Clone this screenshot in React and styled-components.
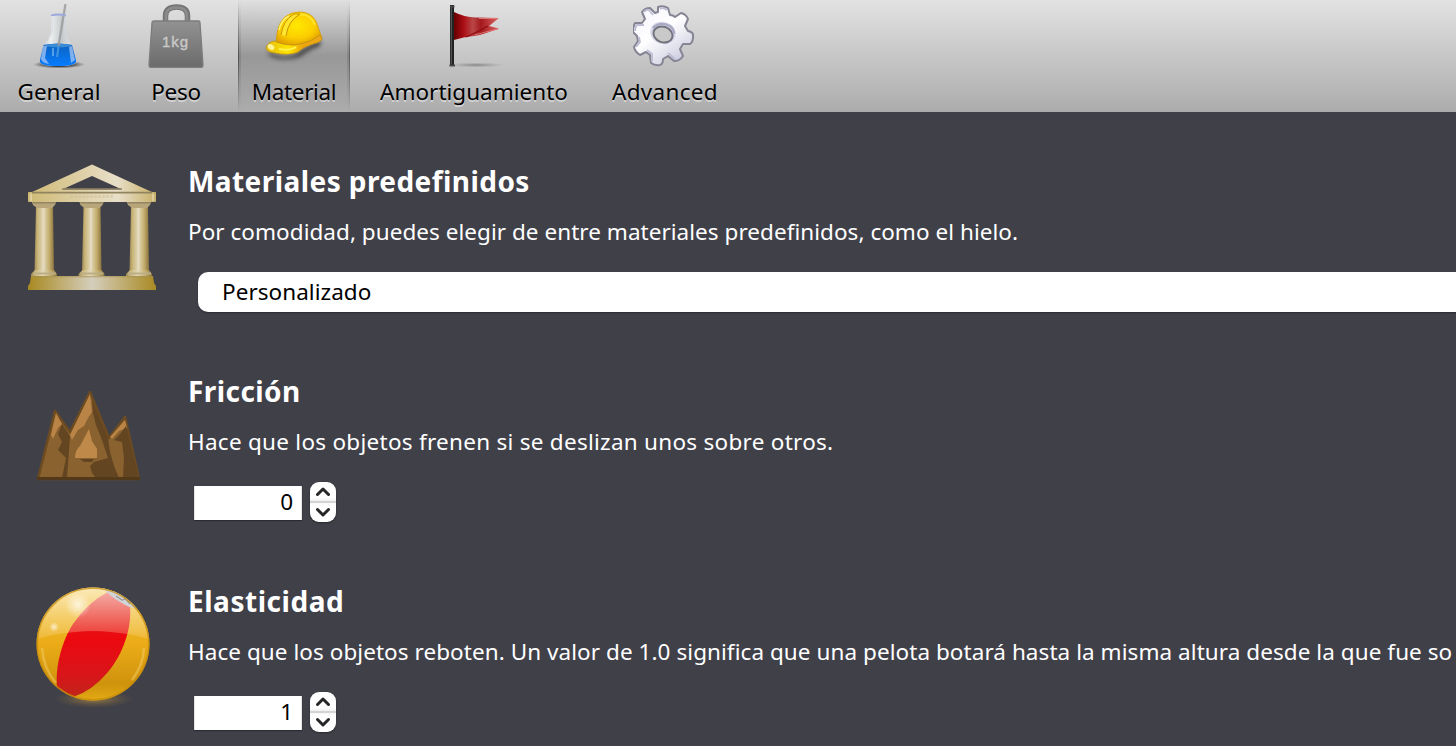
import React from "react";
import styled, { createGlobalStyle } from "styled-components";

const GlobalStyle = createGlobalStyle`
  * { box-sizing: border-box; }
  body { margin: 0; background: #404049; overflow: hidden; }
`;

const Window = styled.div`
  width: 100%;
  height: 746px;
  overflow: hidden;
  display: flex;
  flex-direction: column;
  background: #404049;
  border-bottom: 1px solid #47404b;
  font-family: "Noto Sans", "Open Sans", sans-serif;
  font-size: 22.5px;
  color: #fff;
`;

const Toolbar = styled.nav`
  flex: none;
  height: 112px;
  display: flex;
  gap: 16px;
  padding-left: 4px;
  background: linear-gradient(#e2e2e2, #acacac);
`;

const edge = (side, alpha, width) =>
  `linear-gradient(rgba(0,0,0,0), rgba(0,0,0,${alpha}) 50%, rgba(0,0,0,0)) ${side} / ${width}px 100% no-repeat`;

const Tab = styled.button`
  flex: none;
  width: ${(p) => p.$width}px;
  height: 112px;
  padding: 4px 0 0;
  border: 0;
  display: flex;
  flex-direction: column;
  align-items: center;
  font: inherit;
  color: #000;
  background: ${(p) =>
    p.$active
      ? `${edge("left", 0.4, 1)}, ${edge("left", 0.12, 3)}, ${edge("right", 0.3, 1)}, ${edge("right", 0.12, 3)},
         linear-gradient(#e0e0e0, #989898 50%, #acacac)`
      : "transparent"};
`;

const TabLabel = styled.span`
  height: 40px;
  line-height: 40px;
  margin-top: 4px;
  white-space: nowrap;
  letter-spacing: ${(p) => p.$spacing}px;
  text-shadow: 0 2px 0 rgba(255, 255, 255, 0.45);
`;

const Content = styled.main`
  display: flex;
  flex-direction: column;
  gap: 60px;
  padding: 50px 0 0 28px;
`;

const Section = styled.section`
  display: grid;
  grid-template-columns: 128px 1fr;
  column-gap: 32px;
  height: 150px;
`;

const Picture = styled.div`
  padding-top: 2px;
  height: 130px;
  svg { display: block; }
`;

const Body = styled.div`
  min-width: 0;
`;

const Title = styled.h2`
  margin: 0;
  font-size: 28px;
  font-weight: 700;
  line-height: 38px;
  letter-spacing: ${(p) => p.$spacing}px;
  white-space: nowrap;
`;

const Description = styled.p`
  margin: 12px 0 20px;
  line-height: 40px;
  letter-spacing: ${(p) => p.$spacing}px;
  white-space: nowrap;
`;

const Select = styled.div`
  margin-left: 10px;
  height: 40px;
  padding-left: 24px;
  line-height: 40px;
  border-radius: 10px 0 0 10px;
  background: #fff;
  color: #000;
  letter-spacing: 0.05px;
  box-shadow: 0 1px 2px rgba(0, 0, 0, 0.35);
`;

const Spinner = styled.div`
  display: flex;
  align-items: flex-start;
  gap: 8px;
  height: 40px;
  padding-left: 6px;
`;

const NumberField = styled.div`
  width: 108px;
  height: 34px;
  margin-top: 4px;
  padding-right: 8px;
  line-height: 32px;
  text-align: right;
  color: #000;
  background: #fff;
  border: solid #e3e3e3;
  border-width: 0 1px;
  box-shadow: 0 1px 1px rgba(0, 0, 0, 0.3);
`;

const Stepper = styled.div`
  width: 26px;
  height: 40px;
  display: flex;
  flex-direction: column;
  border-radius: 9px;
  background: linear-gradient(#fff 40%, #f0f0f0 47%, #d4d4d4 48% 52%, #f8f8f8 53%, #fff 60%);
  box-shadow: 0 1px 2px rgba(0, 0, 0, 0.4);
  svg { display: block; }
`;

const FlaskIcon = () => (
  <svg width="64" height="64" viewBox="0 0 64 64">
    <defs>
      <radialGradient id="flaskShadow">
        <stop offset="0.5" stopColor="#222" stopOpacity=".8" />
        <stop offset="1" stopColor="#444" stopOpacity="0" />
      </radialGradient>
      <linearGradient id="flaskGlass">
        <stop offset="0" stopColor="#b9c0cc" />
        <stop offset=".3" stopColor="#f0f2f3" />
        <stop offset=".6" stopColor="#c3c9cb" />
        <stop offset="1" stopColor="#eef0f4" />
      </linearGradient>
      <linearGradient id="flaskLiquid" x2="0" y2="1">
        <stop offset="0" stopColor="#0b62bd" />
        <stop offset="1" stopColor="#087cff" />
      </linearGradient>
    </defs>
    <ellipse cx="32" cy="60.5" rx="26" ry="4" fill="url(#flaskShadow)" />
    <path d="M24 11H38V27C38 31 42 36 44 41L49 56C50 60 46 62 31 62S12 60 13 56L17 42C19 37 24 31 24 27Z" fill="url(#flaskGlass)" opacity=".9" />
    <path d="M16.500 41Q31 38 45 41L49 56C50 60 45 62 31 62S12 60 13 56Z" fill="url(#flaskLiquid)" />
    <ellipse cx="31" cy="41.500" rx="13.500" ry="1.700" fill="#3a8bd8" />
    <path d="M16 42L14 55Q15 59 22 60L18 54L20 42Z M45 42L48 56L44 59L42 43Z" fill="#b1ccf5" opacity=".7" />
    <path d="M38.500 0L37 9L31.500 42" fill="none" stroke="#999" strokeWidth="2.300" opacity=".8" />
    <path d="M31.500 43L30 53" fill="none" stroke="#5aa6ea" strokeWidth="2" opacity=".7" />
    <path d="M26 44V52" stroke="#71b6ee" strokeWidth="1.400" />
    <path d="M24 11.500Q31 9.500 39 11.500" fill="none" stroke="#9ba9dc" strokeWidth="1.800" />
    <path d="M25 13V27Q23 34 19 39M38 13V28Q39 33 42 38" fill="none" stroke="#d3d7dd" strokeWidth="1" />
  </svg>
);

const WeightText = styled.text`
  font-family: "Liberation Sans", Arial, sans-serif;
  font-size: 15px;
  fill: #c9c9c9;
  stroke: #c9c9c9;
  stroke-width: 0.4px;
`;

const WeightIcon = () => (
  <svg width="64" height="64" viewBox="0 0 64 64">
    <defs>
      <linearGradient id="weight" x2="0" y2="1">
        <stop offset="0" stopColor="#929292" />
        <stop offset="1" stopColor="#6b6b6b" />
      </linearGradient>
    </defs>
    <path d="M21.500 19V12Q21.500 3 32.500 3T43.500 12V19" fill="none" stroke="#757575" strokeWidth="5.500" />
    <path d="M22 18V12Q22 3.500 32.500 3.500T43 12V18" fill="none" stroke="#8c8c8c" strokeWidth="2.500" />
    <path d="M10 17H55Q56 17 56 19L59 61Q59 63.500 57 63.500H7Q5 63.500 5 61L8 19Q8 17 10 17Z" fill="url(#weight)" stroke="#7c7c7c" strokeWidth="1.300" />
    <WeightText x="18" y="43" textLength="26">1kg</WeightText>
  </svg>
);

const HelmetIcon = () => (
  <svg width="64" height="64" viewBox="0 0 64 64">
    <defs>
      <radialGradient id="helmet" cx=".45" cy=".4" r=".65">
        <stop offset="0" stopColor="#ffe900" />
        <stop offset=".6" stopColor="#fccd00" />
        <stop offset="1" stopColor="#dc9800" />
      </radialGradient>
      <linearGradient id="helmetBrim">
        <stop offset="0" stopColor="#e5bd12" />
        <stop offset=".4" stopColor="#ffe400" />
        <stop offset=".65" stopColor="#eba60c" />
        <stop offset="1" stopColor="#eca71b" />
      </linearGradient>
      <filter id="helmetBlur" x="-20%" y="-20%" width="140%" height="160%"><feGaussianBlur stdDeviation="2" /></filter>
    </defs>
    <path d="M5 47Q20 56 34 50Q45 41 59 36L58 42Q45 47 38 53Q20 58 8 52Z" fill="#444" filter="url(#helmetBlur)" />
    <path d="M14 38C15 31 15 20 23 13Q29 8 37 8C48 8 53 14 55 20Q57 26 60 34Q51 40 40 40Q24 43 14 39Z" fill="url(#helmet)" stroke="#d69d04" strokeWidth=".8" />
    <path d="M4 44Q6 38 12 37Q26 43 38 40Q49 38 58 31L60 35Q59 38 51 40Q41 43 36 48Q27 52 13 49Q4 48 4 44Z" fill="url(#helmetBrim)" stroke="#bd8f13" strokeWidth=".8" />
    <path d="M19 31Q21 16 32 10L38 10Q26 17 24 32" fill="#ffe52c" stroke="#c89400" strokeWidth="1" />
    <path d="M17 26Q19 16 27 12" fill="none" stroke="#fff06f" strokeWidth="1.500" />
    <path d="M38 10.500Q49 10 53 21" fill="none" stroke="#ffe52e" strokeWidth="2" />
    <ellipse cx="9" cy="43" rx="3.500" ry="2.500" fill="#fff49a" transform="rotate(30 9 43)" />
    <path d="M17 45Q28 47 34 43" fill="none" stroke="#fff34c" strokeWidth="2" />
  </svg>
);

const FlagIcon = () => (
  <svg width="64" height="64" viewBox="0 0 64 64">
    <defs>
      <linearGradient id="flag">
        <stop offset="0" stopColor="#650000" />
        <stop offset=".2" stopColor="#a80c12" />
        <stop offset=".42" stopColor="#b94646" />
        <stop offset=".6" stopColor="#a3191d" />
        <stop offset="1" stopColor="#dd6565" />
      </linearGradient>
      <radialGradient id="flagShadow">
        <stop offset="0" stopColor="#555" stopOpacity=".55" />
        <stop offset="1" stopColor="#777" stopOpacity="0" />
      </radialGradient>
    </defs>
    <ellipse cx="34" cy="61" rx="28" ry="2.500" fill="url(#flagShadow)" />
    <path d="M12 8Q22 13 34 13.500L57 14L47 22L57 24.500Q40 31 32 32Q21 33 12 36Z" fill="url(#flag)" />
    <path d="M24 33Q36 28 46 22" fill="none" stroke="#8f0d13" strokeWidth="1.200" />
    <path d="M37 14.500L56 14.500M33 31Q43 28 56 25" stroke="#e07777" strokeWidth="1" fill="none" />
    <path d="M10 1V62" stroke="#222" strokeWidth="4" />
    <path d="M9.300 2V60" stroke="#5a6060" strokeWidth="1" />
    <path d="M8 2.500H12.500M7.500 61.500H13" stroke="#454949" strokeWidth="2" />
  </svg>
);

const GearIcon = () => (
  <svg width="64" height="64" viewBox="0 0 64 64">
    <defs>
      <linearGradient id="gear" x2=".7" y2="1">
        <stop offset="0" stopColor="#f3f3fb" />
        <stop offset=".5" stopColor="#fff" />
        <stop offset="1" stopColor="#cbcbe0" />
      </linearGradient>
    </defs>
    <g transform="translate(-1 0)">
      <path d="M26 3Q31 1 36 4L38 11Q41 11 43 13L49 9Q54 10 56 15L53 22L56 27Q62 28 61 33Q61 38 58 40L51 40L48 45L51 52Q48 57 42 57L36 52L31 55Q31 60 28 61Q23 62 19 59L18 51L14 48L8 51Q3 48 2 43L6 37L5 32L1 28Q1 23 3 19L10 19L13 15L10 8Q13 4 18 4L23 9L26 8Z"
        fill="url(#gear)" stroke="#858594" strokeWidth="2" strokeLinejoin="round" />
      <path d="M28 5Q31 3 35 6M12 8Q14 5 17 6L21 11M3 27Q3 23 5 21L12 21M4 43L8 38L7 33M20 58L20 50L15 46M43 55L36 49" fill="none" stroke="#bdbdd3" strokeWidth="1.800" />
      <ellipse cx="31" cy="29" rx="13" ry="11" fill="#d9d9eb" transform="rotate(20 31 29)" />
      <ellipse cx="31" cy="30.500" rx="9.800" ry="7.800" fill="#c9c9c9" stroke="#72727d" strokeWidth="2" transform="rotate(20 31 30.500)" />
      <path d="M21 24Q28 17 38 22Q42 25 42 30" fill="none" stroke="#aaaac5" strokeWidth="2.500" />
    </g>
  </svg>
);

const TempleIcon = () => (
  <svg width="128" height="128" viewBox="0 0 128 128">
    <defs>
      <linearGradient id="roof">
        <stop offset="0" stopColor="#cfba75" />
        <stop offset=".7" stopColor="#e8dfc9" />
        <stop offset="1" stopColor="#c8b06a" />
      </linearGradient>
      <linearGradient id="column">
        <stop offset="0" stopColor="#9d8854" />
        <stop offset=".15" stopColor="#c8b477" />
        <stop offset=".45" stopColor="#e2d8bb" />
        <stop offset=".75" stopColor="#c4ae6d" />
        <stop offset="1" stopColor="#8a733e" />
      </linearGradient>
      <linearGradient id="plinth">
        <stop offset="0" stopColor="#a88920" />
        <stop offset=".5" stopColor="#d5cebc" />
        <stop offset="1" stopColor="#a98a23" />
      </linearGradient>
    </defs>
    <path fillRule="evenodd" d="M64 .5L126 29H2ZM64 12L34 25.500H94Z" fill="url(#roof)" />
    <path d="M34 25H94" stroke="#958763" strokeWidth="1.500" />
    <rect y="28" width="128" height="10" rx="1" fill="url(#roof)" />
    <path d="M4 28.700H124" stroke="#92845f" strokeWidth="1.800" />
    <path d="M3 30V37M125 30V37" stroke="#eee3c9" strokeWidth="1" />
    <path d="M42 32.500H86" stroke="#cdbf97" strokeWidth="2.500" strokeDasharray="3 1" opacity=".5" />
    {[0, 47.5, 95].map((x) => (
      <g key={x} transform={`translate(${x} 0)`}>
        <path d="M8 43H25L26 107H6.500Z" fill="url(#column)" />
        <path d="M15.500 44V106" stroke="#e5dbc1" strokeWidth="1.800" />
        <path d="M4 38H28L27 41L24 44H9L5 41Z" fill="#b8a67a" />
        <path d="M5 38.800H28" stroke="#8e8160" strokeWidth="1.300" />
        <path d="M7 106H26L29 110V113H3V110Z" fill="url(#column)" />
        <path d="M5 109.500H28" stroke="#bdae86" strokeWidth="2" />
      </g>
    ))}
    <path d="M3 112H125L126 119L128 122V126H0V122L2 119Z" fill="url(#plinth)" />
    <path d="M3 112.800H125" stroke="#9e8c50" strokeWidth="1" opacity=".7" />
  </svg>
);

const MountainIcon = () => (
  <svg width="128" height="128" viewBox="0 0 128 128">
    <path d="M10 105L27 37L42 58L62 18L81 64L97 43L111 105Z" fill="#89622f" stroke="#6d4b20" strokeWidth="2.500" strokeLinejoin="round" />
    <path d="M62 20L64 38L60 44L56 52L50 56L44 66L42 61ZM28 39L34 50L30 54L25 65L23 61ZM97 46L99 54L91 57L84 65L82 63Z" fill="#ba8447" />
    <path d="M64 26L80 64L82 78L86 92L91 104H68L64 99L62 92L66 88L80 84L74 66L68 51L65 39ZM34 50L42 62L39 104H34L38 84L30 76L34 68L30 60ZM98 52L111 104H95L96 84L94 68L86 66L92 60Z" fill="#644522" />
    <path d="M61 55L64 67L69 75V84H47Q47 76 52 72Z" fill="#bf8a49" />
    <path d="M52 85H66L64 88L56 88Z" fill="#644522" />
    <path d="M9 104.500H112" stroke="#513919" strokeWidth="3" />
  </svg>
);

const BallIcon = () => (
  <svg width="128" height="128" viewBox="0 0 128 128">
    <defs>
      <linearGradient id="ball" x2="0" y2="1">
        <stop offset="0" stopColor="#f1c33b" />
        <stop offset=".5" stopColor="#ebac18" />
        <stop offset=".85" stopColor="#cf920c" />
        <stop offset="1" stopColor="#e3aa14" />
      </linearGradient>
      <linearGradient id="ballGloss" x2="0" y2="1">
        <stop offset="0" stopColor="#fff" stopOpacity=".68" />
        <stop offset="1" stopColor="#ffeab5" stopOpacity=".18" />
      </linearGradient>
      <linearGradient id="ballStripe" x2="0" y2="1">
        <stop offset="0" stopColor="#e2262a" />
        <stop offset=".45" stopColor="#eb090f" />
        <stop offset=".8" stopColor="#d8161a" />
        <stop offset="1" stopColor="#bf2519" />
      </linearGradient>
      <radialGradient id="ballShadow">
        <stop offset="0" stopColor="#a78645" stopOpacity=".9" />
        <stop offset="1" stopColor="#735f3a" stopOpacity="0" />
      </radialGradient>
      <radialGradient id="spark">
        <stop offset="0" stopColor="#fff" stopOpacity=".7" />
        <stop offset="1" stopColor="#fff" stopOpacity="0" />
      </radialGradient>
      <clipPath id="ballClip"><circle cx="65" cy="60" r="56.500" /></clipPath>
    </defs>
    <ellipse cx="66" cy="115" rx="40" ry="9" fill="url(#ballShadow)" />
    <circle cx="65" cy="60" r="56.500" fill="url(#ball)" />
    <g clipPath="url(#ballClip)">
      <path d="M80 8Q92 15 102 22C104 44 95 70 80 88Q64 107 45 113L29 104C27 82 34 57 45 40Q60 18 80 8Z" fill="url(#ballStripe)" />
      <path d="M7 56C8 22 32 1 65 1S121 23 123 56Q102 48 65 47Q27 48 7 56Z" fill="url(#ballGloss)" />
      <path d="M74 3Q95 6 108 24Q101 24 94 19Q85 14 80 9Z" fill="#d3d4d7" />
      <path d="M88 12L94 16L98 15M94 11L102 20" stroke="#999" strokeWidth="1.200" fill="none" />
    </g>
    <circle cx="65" cy="60" r="55.700" fill="none" stroke="#c68c0b" strokeWidth="1.500" opacity=".75" />
    <path d="M14 64Q16 86 28 99M116 64Q115 82 104 96" stroke="#f3ce68" strokeWidth="2.500" fill="none" opacity=".5" />
    <circle cx="50" cy="21" r="13" fill="url(#spark)" />
    <circle cx="26" cy="43" r="5" fill="url(#spark)" />
  </svg>
);

const StepArrows = () => (
  <svg width="26" height="40" viewBox="0 0 26 40" fill="none" stroke="#272727" strokeWidth="3" strokeLinecap="round" strokeLinejoin="round">
    <path d="M7.500 12.500L13 7L18.500 12.500M7.500 27.500L13 33L18.500 27.500" />
  </svg>
);

const tabs = [
  { label: "General", width: 110, spacing: 0, Icon: FlaskIcon },
  { label: "Peso", width: 92, spacing: -0.3, Icon: WeightIcon },
  { label: "Material", width: 112, spacing: -0.35, Icon: HelmetIcon, active: true },
  { label: "Amortiguamiento", width: 216, spacing: 0, Icon: FlagIcon },
  { label: "Advanced", width: 134, spacing: 0.3, Icon: GearIcon },
];

const NumberSpinner = ({ value }) => (
  <Spinner>
    <NumberField>{value}</NumberField>
    <Stepper><StepArrows /></Stepper>
  </Spinner>
);

const sections = [
  {
    title: "Materiales predefinidos",
    titleSpacing: 0.43,
    text: "Por comodidad, puedes elegir de entre materiales predefinidos, como el hielo.",
    spacing: 0.04,
    Icon: TempleIcon,
    control: <Select>Personalizado</Select>,
  },
  {
    title: "Fricción",
    titleSpacing: 0.43,
    text: "Hace que los objetos frenen si se deslizan unos sobre otros.",
    spacing: 0.27,
    Icon: MountainIcon,
    control: <NumberSpinner value="0" />,
  },
  {
    title: "Elasticidad",
    titleSpacing: 0.53,
    text: "Hace que los objetos reboten. Un valor de 1.0 significa que una pelota botará hasta la misma altura desde la que fue so",
    spacing: 0.06,
    Icon: BallIcon,
    control: <NumberSpinner value="1" />,
  },
];

export default function App() {
  return (
    <Window>
      <GlobalStyle />
      <Toolbar>
        {tabs.map(({ label, width, spacing, active, Icon }) => (
          <Tab key={label} $width={width} $active={active}>
            <Icon />
            <TabLabel $spacing={spacing}>{label}</TabLabel>
          </Tab>
        ))}
      </Toolbar>
      <Content>
        {sections.map(({ title, titleSpacing, text, spacing, Icon, control }) => (
          <Section key={title}>
            <Picture><Icon /></Picture>
            <Body>
              <Title $spacing={titleSpacing}>{title}</Title>
              <Description $spacing={spacing}>{text}</Description>
              {control}
            </Body>
          </Section>
        ))}
      </Content>
    </Window>
  );
}
